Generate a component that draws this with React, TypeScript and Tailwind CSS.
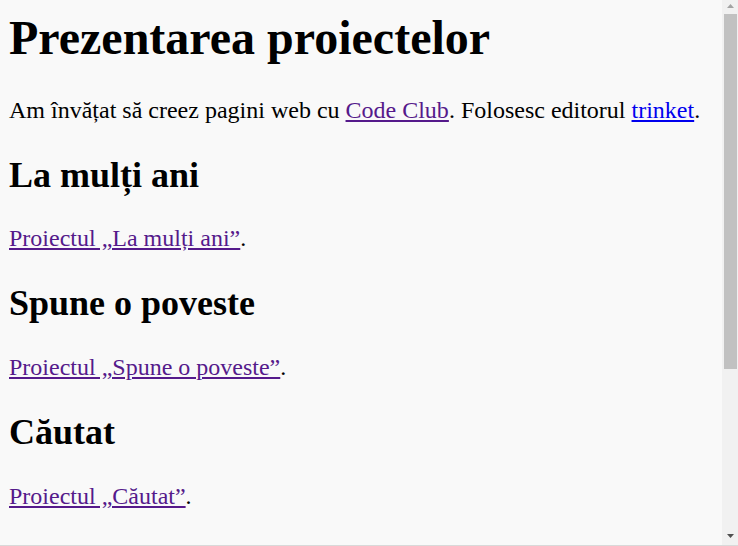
import React from "react";

export default function App() {
  return (
    <div className="h-[546px] w-[738px] flex flex-col overflow-hidden">
      <div className="flex h-[545px]">
        <div className="flex-1 bg-[#f9f9f9] pl-[9px] pr-2 pt-[9.5px] overflow-hidden text-black font-['Liberation_Serif','Times_New_Roman',serif] leading-[normal]">
          <h1 className="mt-0 mb-[32.16px] text-[48px] font-bold leading-[normal]">
            Prezentarea proiectelor
          </h1>
          <p className="my-6 text-[24px] leading-[normal]">
            Am învățat să creez pagini web cu{" "}
            <a className="underline text-[#551a8b]">Code Club</a>. Folosesc editorul{" "}
            <a className="underline text-[#0000ee]">trinket</a>.
          </p>
          <h2 className="my-[29.88px] text-[36px] font-bold leading-[normal]">La mulți ani</h2>
          <p className="my-6 text-[24px] leading-[normal]">
            <a className="underline text-[#551a8b]">Proiectul „La mulți ani”</a>.
          </p>
          <h2 className="my-[29.88px] text-[36px] font-bold leading-[normal]">Spune o poveste</h2>
          <p className="my-6 text-[24px] leading-[normal]">
            <a className="underline text-[#551a8b]">Proiectul „Spune o poveste”</a>.
          </p>
          <h2 className="my-[29.88px] text-[36px] font-bold leading-[normal]">Căutat</h2>
          <p className="my-6 text-[24px] leading-[normal]">
            <a className="underline text-[#551a8b]">Proiectul „Căutat”</a>.
          </p>
        </div>
        <div className="w-[16px] bg-[#f1f1f1] flex flex-col">
          <div className="h-[14px] flex justify-center items-start pt-[4px]">
            <svg width="7" height="4" viewBox="0 0 7 4">
              <polygon points="3.5,0 7,4 0,4" fill="#a3a3a3" />
            </svg>
          </div>
          <div className="ml-[2px] w-[13px] h-[355px] bg-[#c1c1c1]" />
          <div className="flex-1" />
          <div className="h-[14px] flex justify-center items-start pt-[3px]">
            <svg width="7" height="4" viewBox="0 0 7 4">
              <polygon points="0,0 7,0 3.5,4" fill="#505050" />
            </svg>
          </div>
        </div>
      </div>
      <div className="h-px bg-[#d9d9d9]" />
    </div>
  );
}
